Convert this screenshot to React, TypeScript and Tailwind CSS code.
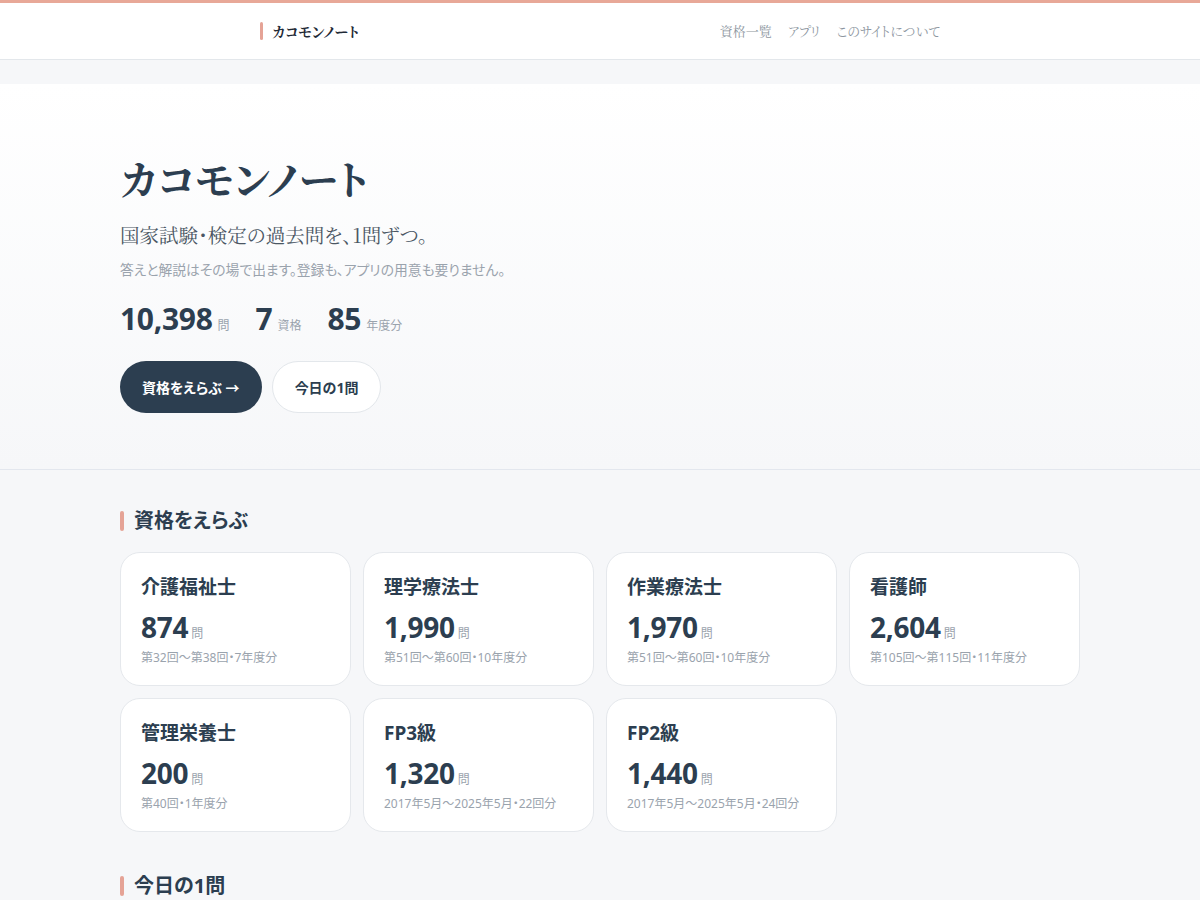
const serif = "font-['Noto_Serif_CJK_JP','Noto_Serif_JP','IPAMincho','Liberation_Serif',serif]";
const sans = "font-['Noto_Sans','Noto_Sans_CJK_JP',sans-serif]";

const exams = [
  { name: "介護福祉士", count: "874", note: "第32回〜第38回・7年度分" },
  { name: "理学療法士", count: "1,990", note: "第51回〜第60回・10年度分" },
  { name: "作業療法士", count: "1,970", note: "第51回〜第60回・10年度分" },
  { name: "看護師", count: "2,604", note: "第105回〜第115回・11年度分" },
  { name: "管理栄養士", count: "200", note: "第40回・1年度分" },
  { name: "FP3級", count: "1,320", note: "2017年5月〜2025年5月・22回分" },
  { name: "FP2級", count: "1,440", note: "2017年5月〜2025年5月・24回分" },
];

function SectionTitle({ children }: { children: React.ReactNode }) {
  return (
    <h2 className="flex items-center gap-[10px] text-[20px] leading-[28px] font-bold text-[#2c3e50]">
      <span className="w-[4px] h-[20px] rounded-full bg-[#e5a396]" />
      {children}
    </h2>
  );
}

export default function App() {
  return (
    <div className={`min-h-screen bg-[#f6f7f9] [font-feature-settings:'palt'] ${sans}`}>
      {/* header */}
      <header className="bg-white border-t-[3px] border-t-[#e8a898] border-b border-b-[#e3e7eb]">
        <div className="max-w-[680px] mx-auto h-[56px] flex items-center justify-between">
          <div className={`flex items-center gap-[9px] text-[14px] font-bold text-[#1f2a36] ${serif}`}>
            <span className="w-[3px] h-[18px] rounded-full bg-[#e5a396]" />
            カコモンノート
          </div>
          <nav className={`flex items-center gap-[16px] text-[13px] text-[#8d96a0] ${serif}`}>
            <span>資格一覧</span>
            <span>アプリ</span>
            <span>このサイトについて</span>
          </nav>
        </div>
      </header>

      <div className="h-[24px]" />

      {/* hero */}
      <section className="bg-gradient-to-b from-white to-[#f6f7f9] border-b border-[#e3e7ee]">
        <div className="max-w-[960px] mx-auto pt-[68px] pb-[56px]">
          <h1 className={`text-[40px] leading-[52px] font-bold text-[#2c3e50] ${serif}`}>
            カコモンノート
          </h1>
          <p className={`mt-[17px] text-[19.5px] leading-[28px] text-[#4a5663] ${serif}`}>
            国家試験・検定の過去問を、1問ずつ。
          </p>
          <p className="mt-[11px] text-[13.8px] leading-[20px] text-[#9aa3ad]">
            答えと解説はその場で出ます。登録も、アプリの用意も要りません。
          </p>
          <div className="mt-[19px] flex items-baseline gap-[26px] text-[#2c3e50]">
            {[
              ["10,398", "問"],
              ["7", "資格"],
              ["85", "年度分"],
            ].map(([n, u]) => (
              <div key={u} className="flex items-baseline gap-[5px]">
                <span className="text-[30px] leading-[40px] font-bold tracking-[-0.01em]">{n}</span>
                <span className="text-[12px] text-[#9aa3ad]">{u}</span>
              </div>
            ))}
          </div>
          <div className="mt-[22px] flex gap-[10px]">
            <button className="h-[52px] px-[22px] rounded-full bg-[#2c3e50] text-white text-[14px] font-bold">
              資格をえらぶ →
            </button>
            <button className="h-[52px] px-[22px] rounded-full bg-white border border-[#e3e7eb] text-[#2c3e50] text-[14px] font-bold">
              今日の1問
            </button>
          </div>
        </div>
      </section>

      {/* exams */}
      <main className="max-w-[960px] mx-auto pt-[37px]">
        <SectionTitle>資格をえらぶ</SectionTitle>
        <div className="mt-[17px] grid grid-cols-4 gap-[12px]">
          {exams.map((e) => (
            <div key={e.name} className="bg-white border border-[#e5e8ec] rounded-[20px] px-[20px] pt-[20px] pb-[18px]">
              <div className="text-[19px] leading-[28px] font-bold text-[#2c3e50]">{e.name}</div>
              <div className="mt-[8px] flex items-baseline gap-[3px] text-[#2c3e50]">
                <span className="text-[28px] leading-[36px] font-bold tracking-[-0.01em]">{e.count}</span>
                <span className="text-[12px] text-[#9aa3ad]">問</span>
              </div>
              <div className="mt-[4px] text-[12px] leading-[18px] text-[#9aa3ad]">{e.note}</div>
            </div>
          ))}
        </div>

        <div className="mt-[40px]">
          <SectionTitle>今日の1問</SectionTitle>
        </div>
        <div className="h-[200px]" />
      </main>
    </div>
  );
}
